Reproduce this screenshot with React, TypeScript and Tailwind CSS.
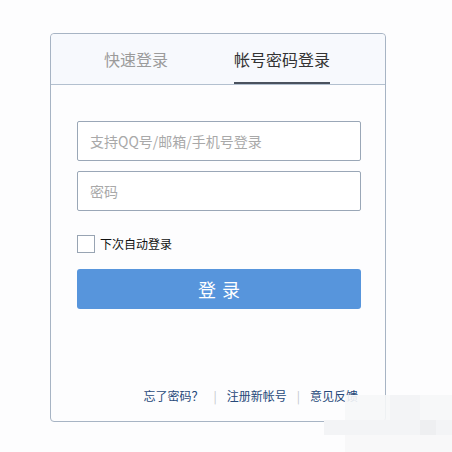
import React, { useState } from 'react';

export default function App() {
  const [tab, setTab] = useState<'quick' | 'account'>('account');
  const [remember, setRemember] = useState(false);

  return (
    <div
      className="relative w-[452px] h-[452px] overflow-hidden bg-[#fdfdfe] pt-[33px] pl-[50px]"
      style={{ fontFamily: '"Noto Sans CJK SC", "Noto Sans", sans-serif' }}
    >
      {/* Card */}
      <div className="w-[336px] h-[389px] border border-[#a7b4c4] rounded-[4px] bg-[#fdfdfe] flex flex-col">
        {/* Tabs */}
        <div className="h-[51px] flex items-stretch pl-[53px] gap-[66px] bg-[#f7f9fd] border-b border-[#b3c0cf] rounded-t-[4px]">
          <button
            onClick={() => setTab('quick')}
            className={
              tab === 'quick'
                ? 'h-full flex items-center text-[16px] text-[#333] border-b-2 border-[#4a525e] pt-[2px]'
                : 'h-full flex items-center text-[16px] text-[#9b9b9b] border-b-2 border-transparent pt-[2px]'
            }
          >
            快速登录
          </button>
          <button
            onClick={() => setTab('account')}
            className={
              tab === 'account'
                ? 'h-full flex items-center text-[16px] text-[#333] border-b-2 border-[#4a525e] pt-[2px]'
                : 'h-full flex items-center text-[16px] text-[#9b9b9b] border-b-2 border-transparent pt-[2px]'
            }
          >
            帐号密码登录
          </button>
        </div>

        {/* Form */}
        <div className="flex-1 flex flex-col px-[26px] pt-[36px]">
          <input
            placeholder="支持QQ号/邮箱/手机号登录"
            className="w-[284px] h-[40px] border border-[#9aa7b7] rounded-[2px] bg-white px-[12px] text-[14px] text-[#333] placeholder:text-[#a9a9a9] outline-none"
          />
          <input
            type="password"
            placeholder="密码"
            className="mt-[10px] w-[284px] h-[40px] border border-[#9aa7b7] rounded-[2px] bg-white px-[12px] text-[14px] text-[#333] placeholder:text-[#a9a9a9] outline-none"
          />

          <label className="mt-[24px] flex items-center gap-[5px] cursor-pointer select-none">
            <span
              onClick={() => setRemember(!remember)}
              className="w-[18px] h-[18px] border border-[#98a4b3] bg-white flex items-center justify-center"
            >
              {remember && <span className="text-[12px] leading-none text-[#5795dc]">✓</span>}
            </span>
            <span className="text-[12px] text-[#111]">下次自动登录</span>
          </label>

          <button className="mt-[16px] w-[284px] h-[40px] rounded-[3px] bg-[#5795dc] text-white text-[18px] tracking-[6px] pl-[6px]">
            登录
          </button>

          {/* Footer links */}
          <div className="mt-auto mb-[16px] flex items-center justify-end gap-[10px] text-[12px] text-[#27497a] pr-[1px]">
            <a className="cursor-pointer">忘了密码？</a>
            <span className="text-[#c3c6cb]">|</span>
            <a className="cursor-pointer">注册新帐号</a>
            <span className="text-[#c3c6cb]">|</span>
            <a className="cursor-pointer">意见反馈</a>
          </div>
        </div>
      </div>

      {/* Mosaic blur overlay at bottom right */}
      <div className="absolute left-[345px] top-[395px] w-[107px] h-[25px] bg-[#f6f7f8]/90" />
      <div className="absolute left-[390px] top-[395px] w-[30px] h-[25px] bg-[#f3f4f6]" />
      <div className="absolute left-[324px] top-[420px] w-[128px] h-[15px] bg-[#f3f4f6]" />
      <div className="absolute left-[420px] top-[420px] w-[16px] h-[15px] bg-[#eeeff1]" />
      <div className="absolute left-[345px] top-[435px] w-[107px] h-[17px] bg-[#f8f8f9]" />
    </div>
  );
}
